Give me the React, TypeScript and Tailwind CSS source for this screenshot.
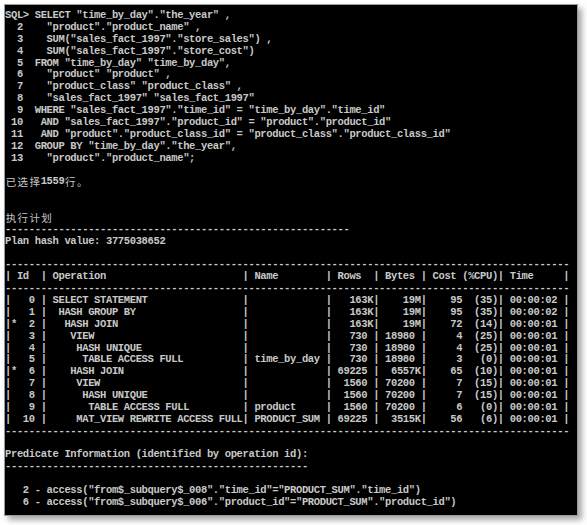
import React from "react";

type PlanRow = [string, string, string, string, string, string, string, string, string];

const plan: PlanRow[] = [
  [" ", "0", "SELECT STATEMENT", "", "163K", "19M", "95", "35", "00:00:02"],
  [" ", "1", " HASH GROUP BY", "", "163K", "19M", "95", "35", "00:00:02"],
  ["*", "2", "  HASH JOIN", "", "163K", "19M", "72", "14", "00:00:01"],
  [" ", "3", "   VIEW", "", "730", "18980", "4", "25", "00:00:01"],
  [" ", "4", "    HASH UNIQUE", "", "730", "18980", "4", "25", "00:00:01"],
  [" ", "5", "     TABLE ACCESS FULL", "time_by_day", "730", "18980", "3", "0", "00:00:01"],
  ["*", "6", "   HASH JOIN", "", "69225", "6557K", "65", "10", "00:00:01"],
  [" ", "7", "    VIEW", "", "1560", "70200", "7", "15", "00:00:01"],
  [" ", "8", "     HASH UNIQUE", "", "1560", "70200", "7", "15", "00:00:01"],
  [" ", "9", "      TABLE ACCESS FULL", "product", "1560", "70200", "6", "0", "00:00:01"],
  [" ", "10", "    MAT_VIEW REWRITE ACCESS FULL", "PRODUCT_SUM", "69225", "3515K", "56", "6", "00:00:01"],
];

const num = (v: string) => (/[KM]$/.test(v) ? v.padStart(7) : (v + " ").padStart(7));

const planLine = ([flag, id, op, name, rows, bytes, cost, cpu, time]: PlanRow) =>
  "|" +
  flag +
  id.padStart(3) +
  " |" +
  (" " + op).padEnd(33) +
  "|" +
  (" " + name).padEnd(13) +
  "|" +
  num(rows) +
  "|" +
  num(bytes) +
  "|" +
  cost.padStart(6) +
  ("(" + cpu + ")").padStart(6) +
  "|" +
  (" " + time).padEnd(10) +
  "|";

const dash = (n: number) => "-".repeat(n);

const lines: string[] = [
  'SQL> SELECT "time_by_day"."the_year" ,',
  '  2    "product"."product_name" ,',
  '  3    SUM("sales_fact_1997"."store_sales") ,',
  '  4    SUM("sales_fact_1997"."store_cost")',
  '  5  FROM "time_by_day" "time_by_day",',
  '  6    "product" "product" ,',
  '  7    "product_class" "product_class" ,',
  '  8    "sales_fact_1997" "sales_fact_1997"',
  '  9  WHERE "sales_fact_1997"."time_id" = "time_by_day"."time_id"',
  ' 10   AND "sales_fact_1997"."product_id" = "product"."product_id"',
  ' 11   AND "product"."product_class_id" = "product_class"."product_class_id"',
  ' 12  GROUP BY "time_by_day"."the_year",',
  ' 13    "product"."product_name";',
  "",
  "已选择1559行。",
  "",
  "",
  "执行计划",
  dash(58),
  "Plan hash value: 3775038652",
  "",
  dash(95),
  "| Id  | Operation" + " ".repeat(23) + "| Name        | Rows  | Bytes | Cost (%CPU)| Time     |",
  dash(95),
  ...plan.map(planLine),
  dash(95),
  "",
  "Predicate Information (identified by operation id):",
  dash(51),
  "",
  '   2 - access("from$_subquery$_008"."time_id"="PRODUCT_SUM"."time_id")',
  '   6 - access("from$_subquery$_006"."product_id"="PRODUCT_SUM"."product_id")',
];

// console grid: one cell per char, wide chars take two cells
const Line = ({ text }: { text: string }) => (
  <div className="h-[11.88px] whitespace-pre">
    {Array.from(text).map((ch, i) =>
      /[\u3000-\u9fff]/.test(ch) ? (
        <span
          key={i}
          className="inline-block h-[11.88px] w-[11.88px] text-center align-top font-['Noto_Sans_CJK_SC',sans-serif] text-[10.5px] leading-[11.88px] font-normal"
        >
          {ch}
        </span>
      ) : (
        <span key={i} className="inline-block h-[11.88px] w-[5.94px] text-center align-top">
          {ch}
        </span>
      ),
    )}
  </div>
);

const App = () => {
  return (
    <div className="h-[525px] w-[587px] bg-white pl-[4px] pt-[4px]">
      <div className="h-[512px] w-[574px] overflow-hidden border border-[#9c9c9c] bg-black pt-[5px] shadow-[4px_4px_6px_rgba(0,0,0,0.35)]">
        <div className="font-['Liberation_Mono',monospace] text-[10.5px] font-bold leading-[11.88px] text-[#c8c8c8]">
          {lines.map((l, i) => (
            <Line key={i} text={l} />
          ))}
        </div>
      </div>
    </div>
  );
};

export default App;
